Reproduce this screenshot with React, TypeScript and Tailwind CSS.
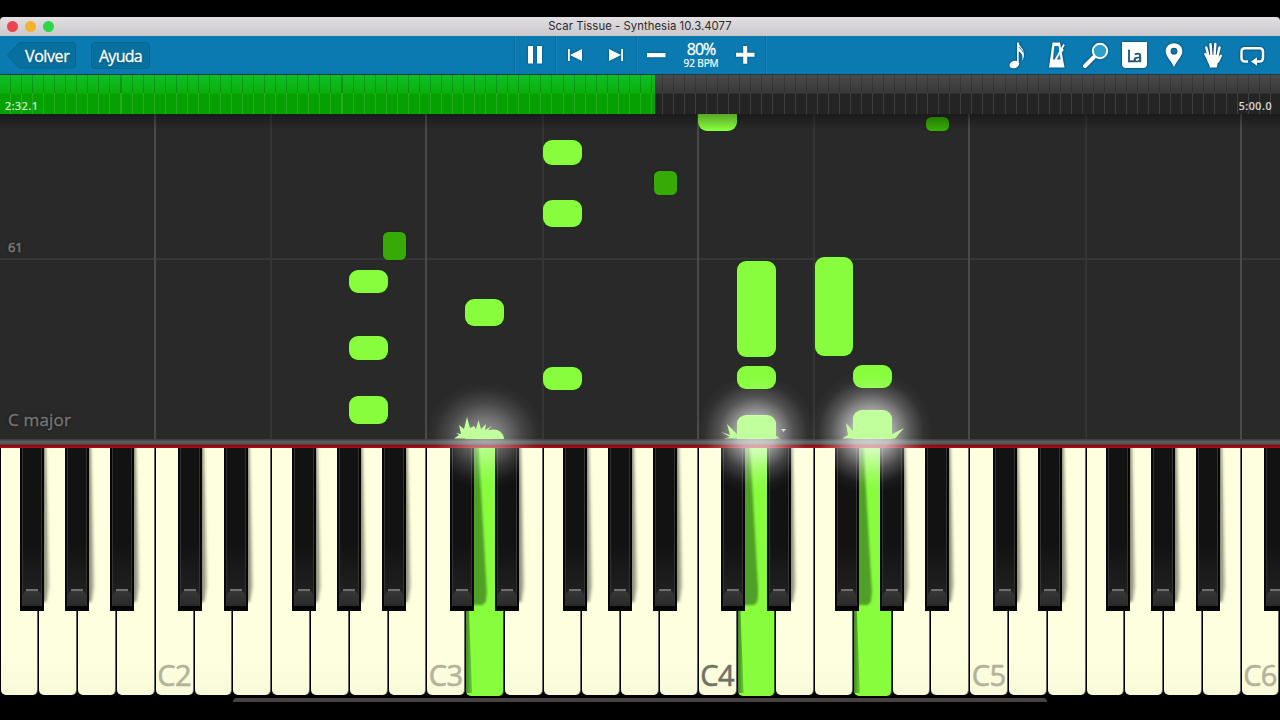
import type { ReactNode } from 'react';

type Note = { x: number; y: number; w: number; h: number; dark?: boolean };

const whiteKeys = Array.from({ length: 33 }, (_, i) => i);
const pressedWhite = [12, 19, 22];
const octaveLabels: Record<number, string> = { 4: 'C2', 11: 'C3', 18: 'C4', 25: 'C5', 32: 'C6' };

const blackOffsets = [23.4, 69, 137, 182, 227];
const blackKeys = [-1, 0, 1, 2, 3, 4]
  .flatMap((oct) => blackOffsets.map((o) => 154.9 + oct * 271.5 + o))
  .filter((x) => x > 0 && x < 1280);
const besidePressed = [449.8, 721.3, 834.9];

const notes: Note[] = [
  { x: 349, y: 156, w: 38.5, h: 23 },
  { x: 349, y: 221.5, w: 38.5, h: 24 },
  { x: 349, y: 282, w: 38.5, h: 28 },
  { x: 382.5, y: 118, w: 23.5, h: 28, dark: true },
  { x: 465.4, y: 184.6, w: 38.5, h: 27 },
  { x: 543, y: 25.6, w: 38.5, h: 25 },
  { x: 543, y: 85.6, w: 38.5, h: 27.4 },
  { x: 543, y: 253, w: 38.5, h: 23 },
  { x: 654, y: 56.6, w: 23.3, h: 24, dark: true },
  { x: 698.2, y: -20, w: 38.5, h: 37.4 },
  { x: 737, y: 147, w: 38.5, h: 96.3 },
  { x: 737, y: 252, w: 38.5, h: 23 },
  { x: 814.6, y: 143.4, w: 38.8, h: 99 },
  { x: 853.3, y: 251.3, w: 38.5, h: 23 },
  { x: 925.5, y: 3.2, w: 23.3, h: 14, dark: true },
  { x: 465.4, y: 316.5, w: 38.5, h: 24 },
  { x: 737, y: 301, w: 38.5, h: 40 },
  { x: 853.3, y: 296, w: 38.5, h: 40 },
];

const octaveLines = [154, 425.4, 697, 968.4, 1240];
const fLines = [270, 542, 813.4, 1085];

function Icon({ children }: { children: ReactNode }) {
  return (
    <span className="flex h-full w-[39px] items-center justify-center">
      <svg
        width="30"
        height="30"
        viewBox="0 0 30 30"
        fill="#fff"
        className="overflow-visible drop-shadow-[0_0_1px_rgba(0,30,60,0.8)]"
      >
        {children}
      </svg>
    </span>
  );
}

function Sep() {
  return <span className="h-full w-px bg-[#0a6d9f] shadow-[1px_0_0_#1c83b7]" />;
}

function TitleBar() {
  return (
    <div className="relative flex h-[19px] items-center justify-center rounded-t-[4px] bg-linear-to-b from-[#e2e0e2] to-[#cbc8cb]">
      <div className="absolute left-[7px] flex gap-[7px]">
        <i className="size-[11px] rounded-full bg-[#ea4550]" />
        <i className="size-[11px] rounded-full bg-[#f3b32e]" />
        <i className="size-[11px] rounded-full bg-[#2cd649]" />
      </div>
      <span className="pt-px font-['Inter',sans-serif] text-[11.3px] leading-none tracking-[0.06px] text-[#2b2a2c]">
        Scar Tissue - Synthesia 10.3.4077
      </span>
    </div>
  );
}

function Toolbar() {
  return (
    <div className="flex h-[38px] items-stretch justify-between bg-[#0a7ab0] font-['Open_Sans',sans-serif] text-white">
      <div className="flex w-[514px] items-center gap-[15px] pl-[7px]">
        <div className="relative flex h-[27px] w-[69px] items-center">
          <svg className="absolute inset-0" width="69" height="27">
            <path d="M.5 13.5 11 2Q12 .5 15 .5H65.500Q68.500 .5 68.500 3.500V23Q68.500 26 65.500 26H15Q12 26 11 25Z" fill="#08709f" stroke="#076592" />
          </svg>
          <span className="relative mt-[2px] ml-[18px] text-[16px] leading-none tracking-[-0.4px] [-webkit-text-stroke:0.3px_#fff] [text-shadow:0_1px_2px_#034a70]">Volver</span>
        </div>
        <div className="flex h-[27px] w-[59px] items-center justify-center rounded-[4px] border border-[#076592] bg-[#08709f] pt-[2px] text-[16px] leading-none tracking-[-0.7px] [-webkit-text-stroke:0.3px_#fff] [text-shadow:0_1px_2px_#034a70]">
          Ayuda
        </div>
      </div>
      <div className="flex h-full items-center">
        <Sep />
        <span className="flex w-[40px] justify-center">
          <svg width="16" height="20" fill="#fff" className="drop-shadow-[0_0_1px_#034a70]">
            <rect x="1" y="1" width="5" height="17.500" />
            <rect x="10" y="1" width="5" height="17.500" />
          </svg>
        </span>
        <Sep />
        <span className="flex w-[80px] justify-around pr-px">
          <svg width="15" height="14" fill="#fff" className="drop-shadow-[0_0_1px_#034a70]">
            <path d="M0 1H1.800V13H0ZM2 7 14 1V13Z" />
          </svg>
          <svg width="15" height="14" fill="#fff" className="drop-shadow-[0_0_1px_#034a70]">
            <path d="M13.200 1H15V13H13.200ZM13 7 1 1V13Z" />
          </svg>
        </span>
        <Sep />
        <span className="flex w-[128px] items-center">
          <svg width="19" height="6" className="ml-[10px] drop-shadow-[0_0_1px_#034a70]">
            <rect y="1" width="18.500" height="4.200" fill="#fff" />
          </svg>
          <span className="flex w-[70px] flex-col items-center pt-px">
            <span className="text-[16px] leading-[15px] tracking-[-1px] [-webkit-text-stroke:0.3px_#fff]">80%</span>
            <span className="text-[10px] leading-[13px] tracking-[-0.1px] [-webkit-text-stroke:0.2px_#fff]">92 BPM</span>
          </span>
          <svg width="19" height="20" fill="#fff" className="drop-shadow-[0_0_1px_#034a70]">
            <path d="M0 7.800H7.200V1H11.200V7.800H18.500V11.800H11.200V18.800H7.200V11.800H0Z" />
          </svg>
        </span>
        <Sep />
      </div>
      <div className="flex w-[514px] justify-end pr-[9px]">
        <Icon>
          <ellipse cx="11.300" cy="24.500" rx="5" ry="3.600" transform="rotate(-20 11.300 24.500)" />
          <path d="M14 2.500H15.700C16 7 21 8 20.800 13.500C21.300 16 20.700 18.500 19 20.500C20.500 15.500 18.500 13 15.700 11.500V24.500H14Z" />
          <path d="M15.900 7C17 9 19.500 9.500 20.300 12.500" stroke="#0a7ab0" fill="none" />
        </Icon>
        <Icon>
          <path d="M10.500 2.500H18L22.500 27.500H7Z" />
          <path d="M12.300 6H16.700L18.500 19.500H10.900Z" fill="#0a7ab0" />
          <path d="M22 4.500 13.500 20" stroke="#fff" strokeWidth="1.800" />
          <path d="M18 9 21 11" stroke="#fff" strokeWidth="3" />
        </Icon>
        <Icon>
          <path d="M13 17 4 26" stroke="#fff" strokeWidth="4" strokeLinecap="round" />
          <circle cx="19" cy="11" r="7.200" fill="#2aa0cf" stroke="#fff" strokeWidth="2" />
        </Icon>
        <Icon>
          <path d="M2 2H27V24Q27 28 23 28H6Q2 28 2 24Z" />
          <text x="14.500" y="22.300" textAnchor="middle" fontSize="16" stroke="#1b5273" strokeWidth=".7" fontFamily="Open Sans, sans-serif" fill="#1b5273" textLength="15.500">La</text>
        </Icon>
        <Icon>
          <path fillRule="evenodd" d="M15 3.200C9.700 3.200 6.700 7 6.700 11.200C6.700 16.500 12 20.500 15 27C18 20.500 23.300 16.500 23.300 11.200C23.300 7 20.300 3.200 15 3.200ZM15 7.800A3.400 3.400 0 1 1 15 14.600A3.400 3.400 0 0 1 15 7.800Z" />
        </Icon>
        <Icon>
          <g stroke="#fff" strokeWidth="2.500" strokeLinecap="round">
            <path d="M10.800 17 8.300 7.500M13.500 16 12.500 4.300M16.500 16 17.300 4M19.200 17 21.500 7.500M20 21.500 22.800 15.800M11 21 7.300 14" />
          </g>
          <path d="M9.500 15H20.800L20.200 21Q19.500 24 18.800 27.500H11.800Q11.500 24.500 9.500 21.500Z" />
        </Icon>
        <Icon>
          <path d="M11 21.500H8Q4.500 21.500 4.500 18V11.800Q4.500 8.300 8 8.300H22.500Q26 8.300 26 11.800V18Q26 21.500 22.500 21.500H19" fill="none" stroke="#fff" strokeWidth="2.500" />
          <path d="M14 21.500 20 17.200V25.800Z" />
        </Icon>
      </div>
    </div>
  );
}

function Progress() {
  return (
    <div className="relative flex h-10 items-end justify-between overflow-hidden border-t border-[#15384a] bg-linear-to-b from-[#4a4a4a] from-0% via-[#383838] via-45% to-[#242424] to-50% px-[5px] pb-px font-['Noto_Sans',sans-serif] text-[10.500px] leading-[14px] text-white">
      <div className="absolute inset-y-0 left-0 w-[655px] bg-linear-to-b from-[#10bf26] from-0% via-[#09b00a] via-45% to-[#07a003] to-50%" />
      <div className="absolute inset-x-0 top-0 h-[18px] bg-[repeating-linear-gradient(90deg,transparent_0_10px,rgba(0,0,0,0.18)_10px_11.05px)]" />
      <div className="absolute inset-x-0 top-[18px] bottom-0 bg-[repeating-linear-gradient(90deg,transparent_0_10px,rgba(255,255,255,0.12)_10px_11.05px)]" />
      <span className="relative tracking-[0.65px] text-[#d9f7d3] [-webkit-text-stroke:0.2px_#d9f7d3]">2:32.1</span>
      <span className="relative mr-[3px] tracking-[0.6px] text-[#e3e3e3] [-webkit-text-stroke:0.2px_#e3e3e3]">5:00.0</span>
    </div>
  );
}

function Lanes() {
  return (
    <div className="relative h-[325px] overflow-hidden bg-[#292929]">
      {fLines.map((x) => (
        <i key={x} className="absolute inset-y-0 w-[1.5px] bg-[#353535]" style={{ left: x }} />
      ))}
      <i className="absolute inset-x-0 top-[143.600px] h-[2px] bg-[#353535]" />
      {octaveLines.map((x) => (
        <i key={x} className="absolute inset-y-0 w-[2px] bg-[#4a4a4a]" style={{ left: x }} />
      ))}
      <span className="absolute top-[124px] left-[8px] font-['Open_Sans',sans-serif] text-[13px] leading-[18px] tracking-[-0.1px] text-[#777] [-webkit-text-stroke:0.6px_#777] [text-shadow:0_0_3px_#111]">61</span>
      <span className="absolute top-[294px] left-[8px] font-['Open_Sans',sans-serif] text-[17px] leading-[24px] tracking-[0.2px] text-[#757575] [-webkit-text-stroke:0.4px_#757575] [text-shadow:0_0_3px_#111]">C major</span>
      {notes.map((n, i) => (
        <div
          key={i}
          className={
            n.dark
              ? 'absolute rounded-[5.5px] bg-[#37aa08] shadow-[0_0_2px_#123005]'
              : 'absolute rounded-[9px] bg-[#87fd3d] shadow-[0_0_2px_#16400a]'
          }
          style={{ left: n.x, top: n.y, width: n.w, height: n.h }}
        />
      ))}
      <div className="absolute inset-x-0 top-0 h-[16px] bg-linear-to-b from-black/35 to-transparent" />
    </div>
  );
}

function BlackKey({ x }: { x: number }) {
  const deep = besidePressed.some((p) => Math.abs(p - x) < 1);
  return (
    <div className="absolute top-0 h-[162.5px] w-6" style={{ left: x }}>
      {deep ? (
        <div className="absolute top-[-4px] left-[20px] h-[161px] blur-[1.3px]">
          <div className="h-full w-[17px] bg-[#509f27] [clip-path:polygon(0_0,50%_0,100%_92%,94%_98%,75%_100%,0_100%)]" />
        </div>
      ) : (
        <div className="absolute top-[-4px] left-[20px] h-[158px] blur-[1.5px]">
          <div className="h-full w-[10px] bg-linear-to-r from-black/50 from-30% to-black/20 [clip-path:polygon(0_0,55%_0,88%_90%,60%_100%,0_100%)]" />
        </div>
      )}
      <div className="absolute inset-0 bg-[#060606]" />
      <div className="absolute top-0 left-[2px] h-[158px] w-[20px] border-x border-[#333] bg-linear-to-b from-[#121212] from-60% to-[#242425]" />
      <div className="absolute top-[142px] left-[3px] h-[16px] w-[18px] rounded-t-[6px] rounded-b-[2px] bg-linear-to-b from-[#39393a] to-[#29292a]" />
      <div className="absolute top-[141px] left-[6px] h-[1.500px] w-[12px] bg-[#6d6d6d]" />
    </div>
  );
}

function Keyboard() {
  return (
    <div className="relative flex h-[248px] overflow-hidden bg-black">
      {whiteKeys.map((k) => {
        const pressed = pressedWhite.includes(k);
        return (
          <div key={k} className="h-full w-[38.79px] shrink-0 pr-[0.3px] pl-[0.7px]">
            <div
              className={
                pressed
                  ? 'relative h-full rounded-b-[5px] border-r border-[#2c5a14] bg-[#87fd3d]'
                  : 'relative flex h-[246.5px] items-end rounded-b-[5px] border-r border-[#66665c] bg-linear-to-b from-[#feffdf] from-85% to-[#f8f9d8]'
              }
            >
              {pressed && (
                <div className="absolute bottom-[3px] left-0 h-[82px] w-[6px] bg-linear-to-r from-[#438a20] to-[#6ad131] blur-[0.5px] [clip-path:polygon(0_0,50%_0,100%_100%,0_100%)]" />
              )}
              {octaveLabels[k] && (
                <span
                  className={
                    k === 18
                      ? "pb-[3px] pl-[1.5px] font-['Open_Sans',sans-serif] text-[29px] leading-[34px] tracking-[-0.6px] text-[#727264] [-webkit-text-stroke:0.6px_#727264]"
                      : "pb-[3px] pl-[1.5px] font-['Open_Sans',sans-serif] text-[29px] leading-[34px] tracking-[-0.6px] text-[#b3b39c] [-webkit-text-stroke:0.6px_#b3b39c]"
                  }
                >
                  {octaveLabels[k]}
                </span>
              )}
            </div>
          </div>
        );
      })}
      {blackKeys.map((x) => (
        <BlackKey key={x} x={x} />
      ))}
    </div>
  );
}

function Sparks() {
  return (
    <div className="pointer-events-none absolute inset-0 overflow-hidden">
      <div className="absolute top-[382px] left-[425px] h-[108px] w-[120px] bg-[radial-gradient(closest-side,rgba(255,255,255,0.5),rgba(255,255,255,0.38)_28%,rgba(255,255,255,0.14)_62%,rgba(255,255,255,0.03)_85%,transparent)]" />
      <div className="absolute top-[374px] left-[696px] h-[120px] w-[120px] bg-[radial-gradient(closest-side,rgba(255,255,255,0.72),rgba(255,255,255,0.6)_30%,rgba(255,255,255,0.2)_62%,rgba(255,255,255,0.04)_85%,transparent)]" />
      <div className="absolute top-[370px] left-[809px] h-[124px] w-[124px] bg-[radial-gradient(closest-side,rgba(255,255,255,0.74),rgba(255,255,255,0.62)_32%,rgba(255,255,255,0.22)_64%,rgba(255,255,255,0.04)_85%,transparent)]" />
      <svg className="absolute top-[400px] left-[440px]" width="480" height="40" fill="#c0ff9b">
        <path d="M14 38.500 19 35 16 33 21 34 19 25 24 29 27 17 30 28 34 26 36 29 38.500 20 41 29 46 24 45 30 52 26 48 30Q62 27 64 38.500Z" />
        <path d="M281 32 290 35 287 24 297 34V23Q298 16 306 16H326Q335 17 336 24V36L340 38.500H284L290 37Z" />
        <path d="M402 38.500 408 35 406 23 413 31V19Q414 11 422 11H443Q451 12 452 19V34L464 28 455 38.500Z" />
        <path d="M341 29H346L343.500 32Z" fill="#ddd" />
      </svg>
    </div>
  );
}

export default function App() {
  return (
    <div className="relative flex h-[720px] w-[1280px] flex-col overflow-hidden bg-black pt-[17px]">
      <TitleBar />
      <Toolbar />
      <Progress />
      <Lanes />
      <div className="h-[6px] bg-linear-to-b from-[#3a3a3a] via-[#626262] to-[#454545]" />
      <div className="h-[3px] bg-linear-to-b from-[#85060d] to-[#c00a1c]" />
      <Keyboard />
      <div className="mt-[2px] ml-[233px] h-[4px] w-[814px] rounded-t-[4px] bg-[#46423f]" />
      <Sparks />
    </div>
  );
}
